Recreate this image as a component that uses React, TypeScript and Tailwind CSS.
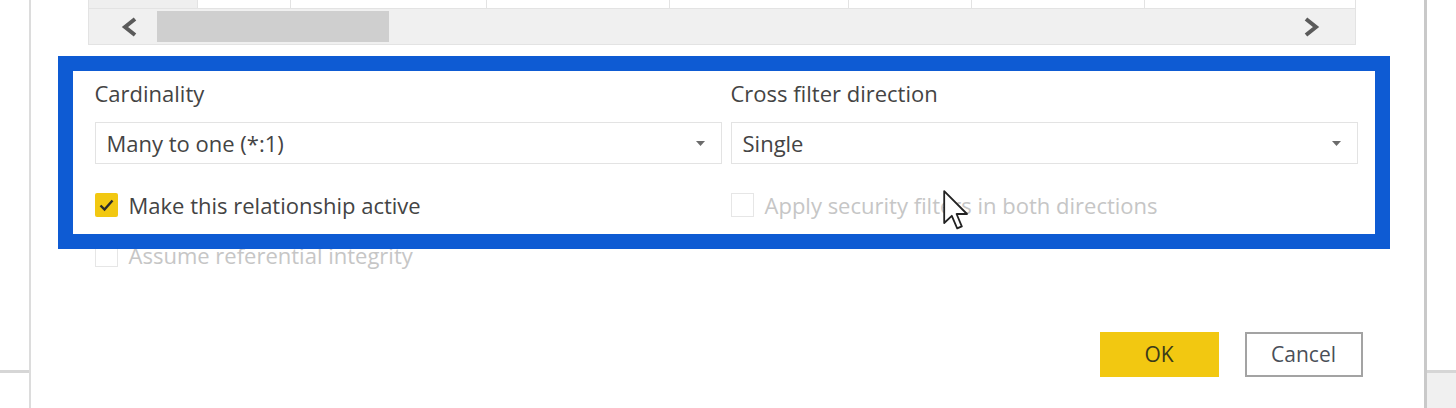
import React from 'react';

const font = { fontFamily: '"Open Sans", "Noto Sans", Arial, sans-serif' };

const Caret = () => (
  <svg width="9" height="5" viewBox="0 0 9 5" className="shrink-0">
    <path d="M0 0 L9 0 L4.5 5 Z" fill="#6b6b6b" />
  </svg>
);

const Select: React.FC<{ value: string }> = ({ value }) => (
  <div className="h-[42px] border border-[#e3e3e3] bg-white flex items-center justify-between pl-[11px] pr-[16px]">
    <span className="text-[22px] text-[#444]">{value}</span>
    <Caret />
  </div>
);

const CheckRow: React.FC<{ label: string; checked?: boolean; disabled?: boolean }> = ({ label, checked, disabled }) => (
  <div className="h-[28px] flex items-center gap-[11px]">
    {checked ? (
      <div className="w-[23px] h-[24px] bg-[#f2c811] rounded-[2px] flex items-center justify-center">
        <svg width="15" height="13" viewBox="0 0 15 13">
          <path d="M1.5 6.5 L5.5 10.5 L13.5 1.5" fill="none" stroke="#2b2b2b" strokeWidth="2.4" />
        </svg>
      </div>
    ) : (
      <div className="w-[23px] h-[24px] border border-[#e6e6e6] bg-white" />
    )}
    <span className={`text-[22px] leading-[28px] ${disabled ? 'text-[#c6c6c6]' : 'text-[#444]'}`}>{label}</span>
  </div>
);

const Chevron: React.FC<{ dir: 'left' | 'right' }> = ({ dir }) => (
  <svg width="20" height="20" viewBox="0 0 20 20">
    <path
      d={dir === 'left' ? 'M15 2 L5 10 L15 18' : 'M5 2 L15 10 L5 18'}
      fill="none"
      stroke="#5a5a5a"
      strokeWidth="4"
    />
  </svg>
);

export default function App() {
  const cols = [109, 93, 196, 183, 179, 123, 173, 210];
  return (
    <div className="relative w-[1456px] h-[408px] overflow-hidden bg-white flex" style={font}>
      {/* left strip */}
      <div className="w-[29px] flex flex-col">
        <div className="h-[370px]" />
        <div className="h-[3px] bg-[#d6d6d6]" />
      </div>

      {/* dialog */}
      <div className="flex-1 border-l-2 border-r-[3px] border-l-[#dcdcdc] border-r-[#c9c9c9] flex flex-col">
        <div className="ml-[57px] mr-[68px]">
          <div className="h-[8px] flex border-x border-[#e3e3e3]">
            {cols.map((w, i) => (
              <div
                key={i}
                style={{ width: w }}
                className={`h-full border-r border-[#e3e3e3] ${i === 0 ? 'bg-[#efefef]' : 'bg-white'} last:border-r-0 last:flex-1`}
              />
            ))}
          </div>
          <div className="h-[37px] bg-[#f0f0f0] border border-[#e3e3e3] flex items-center">
            <div className="w-[68px] flex justify-center pl-[14px]">
              <Chevron dir="left" />
            </div>
            <div className="w-[232px] h-[31px] bg-[#cfcfcf]" />
            <div className="flex-1" />
            <div className="flex pr-[34px]">
              <Chevron dir="right" />
            </div>
          </div>
        </div>

        <div className="ml-[64px] mr-[66px] mt-[34px] grid grid-cols-2 gap-x-[9px]">
          <div className="h-[28px] flex items-center text-[22px] text-[#444]">Cardinality</div>
          <div className="h-[28px] flex items-center text-[22px] text-[#444]">Cross filter direction</div>
          <div className="mt-[15px]">
            <Select value="Many to one (*:1)" />
          </div>
          <div className="mt-[15px]">
            <Select value="Single" />
          </div>
          <div className="mt-[27px]">
            <CheckRow label="Make this relationship active" checked />
          </div>
          <div className="mt-[27px]">
            <CheckRow label="Apply security filters in both directions" disabled />
          </div>
          <div className="mt-[22px]">
            <CheckRow label="Assume referential integrity" disabled />
          </div>
        </div>

        <div className="mt-[63px] mr-[61px] flex justify-end gap-[26px]">
          <button className="w-[119px] h-[45px] bg-[#f2c811] text-[21px] text-[#3a3a1a]">OK</button>
          <button className="w-[118px] h-[45px] bg-white border-2 border-[#a3a3a3] text-[21px] text-[#4a4f58]">Cancel</button>
        </div>
      </div>

      {/* right strip */}
      <div className="w-[30px] flex flex-col">
        <div className="h-[370px]" />
        <div className="h-[3px] bg-[#d6d6d6]" />
        <div className="flex-1 bg-[#f0f0f0]" />
      </div>

      {/* highlight annotation */}
      <div className="absolute left-[58px] top-[56px] w-[1332px] h-[193px] border-[15px] border-[#0e5bd3]" />

      {/* mouse pointer */}
      <svg className="absolute left-[943px] top-[190px]" width="26" height="41" viewBox="0 0 13 20.5">
        <path
          d="M0.6 0.6 L0.6 16.5 L4.4 12.9 L7.1 19.2 L9.4 18.2 L6.8 12 L12 12 Z"
          fill="#fff"
          stroke="#222"
          strokeWidth="0.9"
          strokeLinejoin="round"
        />
      </svg>
    </div>
  );
}
